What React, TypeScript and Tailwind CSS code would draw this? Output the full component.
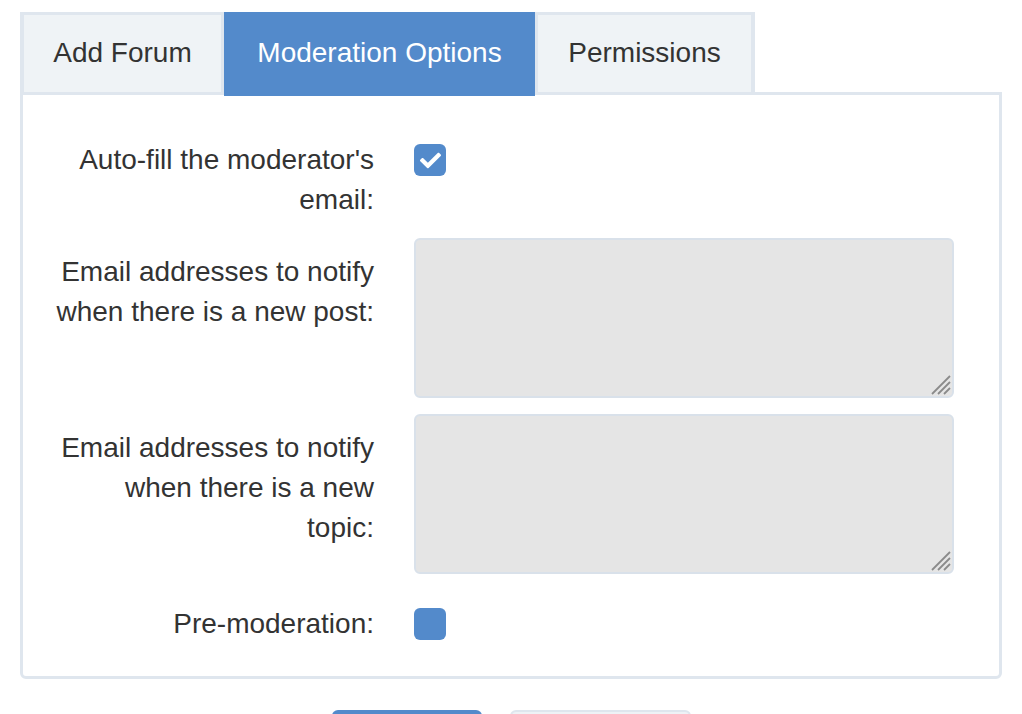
import { FaCheck } from "react-icons/fa";

const font = { fontFamily: '"Liberation Sans", Arial, sans-serif' };

function Checkbox({ checked }: { checked: boolean }) {
  return (
    <div className="w-[32px] h-[32px] rounded-[6px] bg-[#538acb] flex items-center justify-center text-white">
      {checked && <FaCheck size={21} />}
    </div>
  );
}

function Label({ children }: { children: React.ReactNode }) {
  return (
    <div className="ml-[30px] w-[321px] text-right pt-[14px] text-[28px] leading-[40px] text-[#333]">
      {children}
    </div>
  );
}

function Area() {
  return (
    <div className="relative w-[540px] h-[160px]">
      <textarea
        readOnly
        className="block w-full h-full resize-none bg-[#e5e5e5] border-2 border-[#d9e1ea] rounded-[6px] outline-none"
      />
      {/* resize grip */}
      <svg className="absolute right-[3px] bottom-[3px]" width="24" height="24" viewBox="0 0 24 24">
        <g stroke="#8a8a8a" strokeWidth="1.8">
          <line x1="23" y1="5" x2="5" y2="23" />
          <line x1="23" y1="11" x2="11" y2="23" />
          <line x1="23" y1="17" x2="17" y2="23" />
        </g>
      </svg>
    </div>
  );
}

export default function App() {
  return (
    <div className="bg-white h-[714px] pt-[12px] pl-[20px] overflow-hidden" style={font}>
      <div className="w-[982px]">
        <div className="flex items-start h-[80px] relative z-10">
          <div className="w-[204px] h-[80px] pb-[2px] bg-[#eff3f6] border-t-[3px] border-l-[4px] border-r-[3px] border-[#dfe6ee] flex items-center justify-center text-[28px] text-[#333]">
            Add Forum
          </div>
          <div className="w-[311px] h-[84px] pb-[3px] bg-[#538acb] flex items-center justify-center text-[28px] text-white">
            Moderation Options
          </div>
          <div className="w-[220px] h-[80px] pb-[2px] bg-[#eff3f6] border-t-[3px] border-l-[3px] border-r-[4px] border-[#dfe6ee] flex items-center justify-center text-[28px] text-[#333]">
            Permissions
          </div>
        </div>
        <div className="w-[982px] border-[3px] border-[#dfe6ee] rounded-b-[6px] pt-[31px] pb-[32px]">
          <div className="flex mb-[18px]">
            <Label>Auto-fill the moderator's email:</Label>
            <div className="ml-[40px] pt-[18px]">
              <Checkbox checked />
            </div>
          </div>
          <div className="flex mb-[16px]">
            <Label>Email addresses to notify when there is a new post:</Label>
            <div className="ml-[40px]">
              <Area />
            </div>
          </div>
          <div className="flex mb-[16px]">
            <Label>Email addresses to notify when there is a new topic:</Label>
            <div className="ml-[40px]">
              <Area />
            </div>
          </div>
          <div className="flex">
            <Label>Pre-moderation:</Label>
            <div className="ml-[40px] pt-[18px]">
              <Checkbox checked={false} />
            </div>
          </div>
        </div>
        <div className="flex justify-center gap-[28px] mt-[31px]">
          <button aria-label="Save" className="w-[150px] h-[56px] rounded-[6px] bg-[#538acb]" />
          <button aria-label="Cancel" className="w-[181px] h-[56px] rounded-[6px] bg-[#eef2f6] border-2 border-[#dfe6ee]" />
        </div>
      </div>
    </div>
  );
}
